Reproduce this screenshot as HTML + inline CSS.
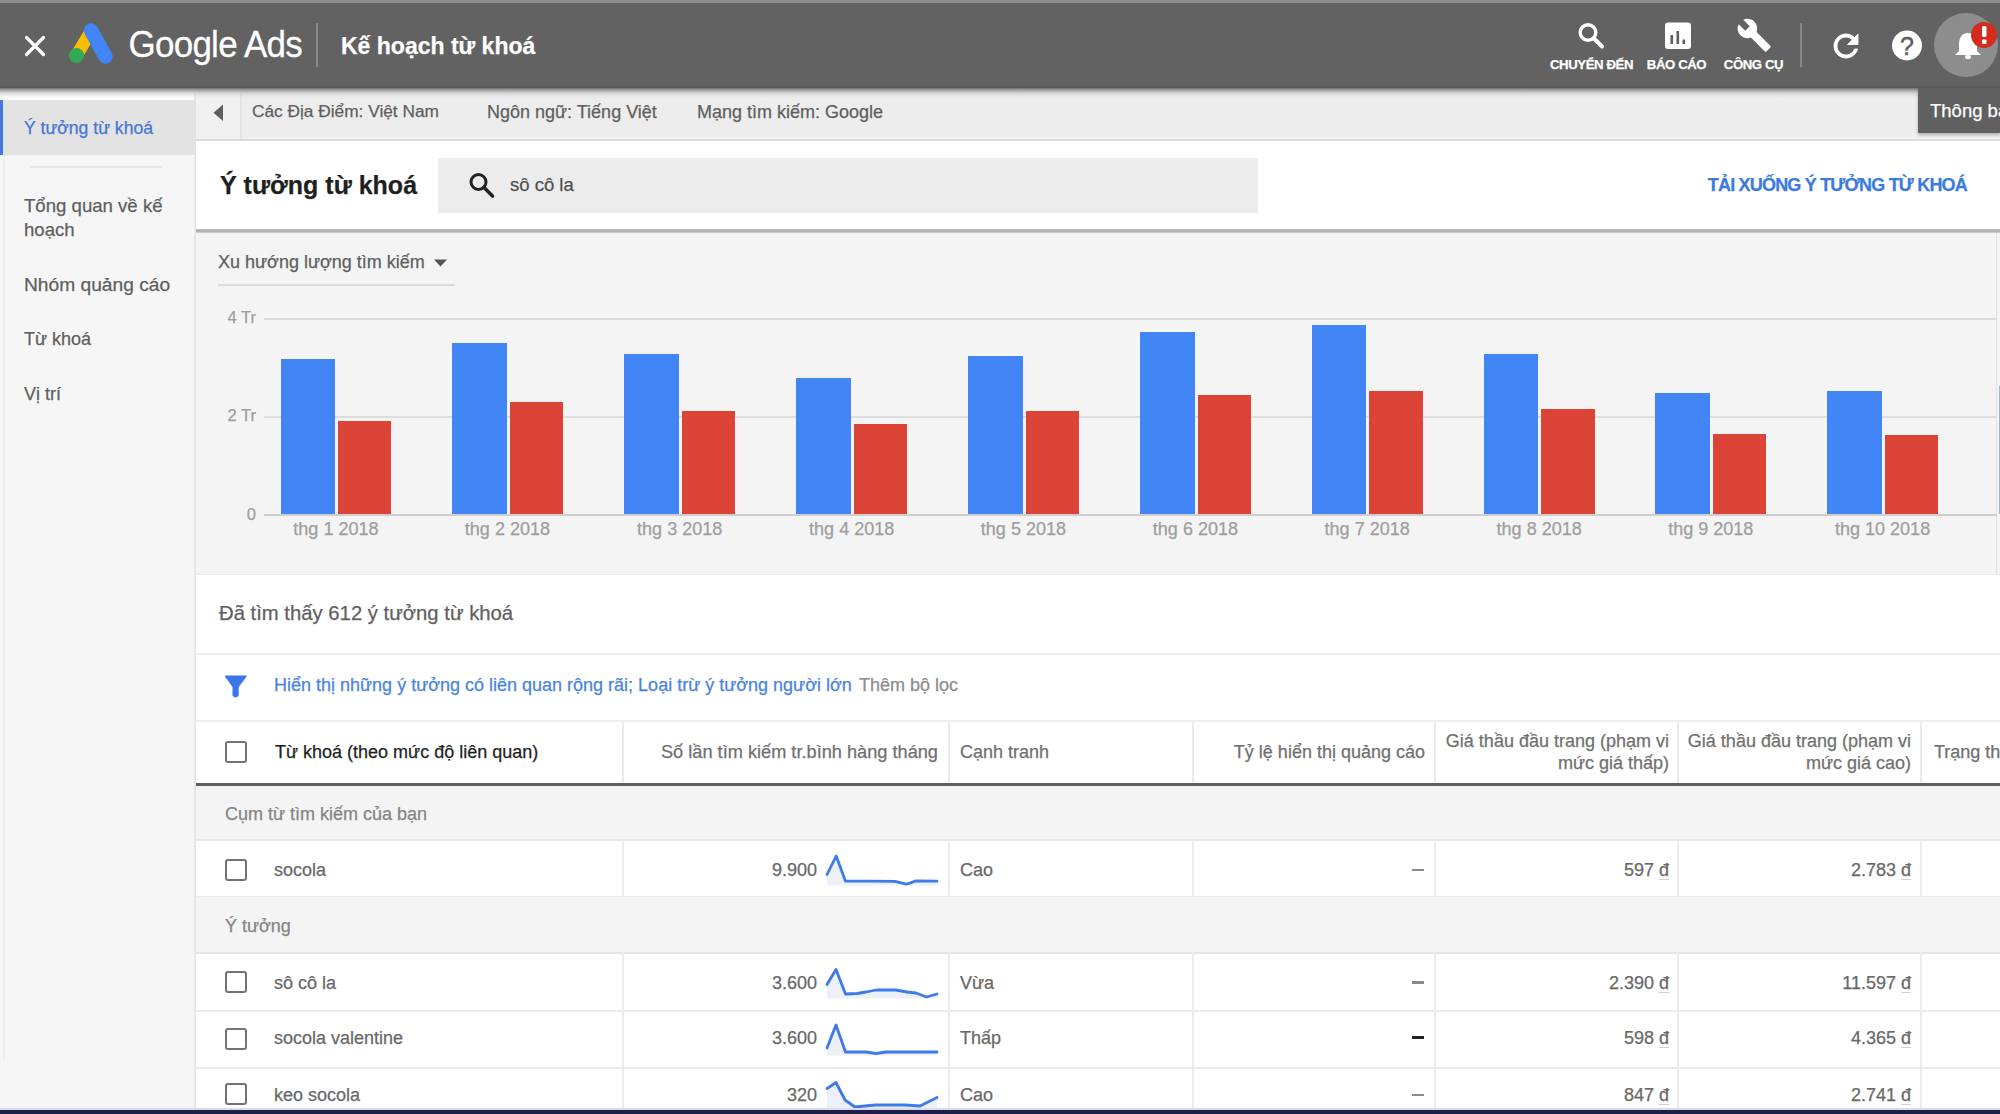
<!DOCTYPE html>
<html lang="vi"><head><meta charset="utf-8"><title>Kế hoạch từ khoá</title>
<style>
html,body{margin:0;padding:0;}
body{width:2000px;height:1114px;overflow:hidden;position:relative;background:#fff;
 font-family:"Liberation Sans",sans-serif;}
.t{position:absolute;white-space:nowrap;-webkit-text-stroke:0.25px currentColor;}
.r{position:absolute;}
svg{position:absolute;overflow:visible;}
.cb{position:absolute;width:18px;height:18px;border:2.5px solid #747474;border-radius:3px;box-sizing:content-box;}
</style></head><body>
<div class="r" style="left:0px;top:0px;width:2000px;height:3px;background:#8d8d8d;"></div>
<div class="r" style="left:0px;top:3px;width:2000px;height:85px;background:#626262;"></div>
<div class="r" style="left:0px;top:86px;width:2000px;height:2px;background:#5a5a5a;"></div>
<svg style="left:0;top:0" width="60" height="90"><path d="M26.5 37.5 L43.5 54.5 M43.5 37.5 L26.5 54.5" stroke="#fff" stroke-width="3.2" stroke-linecap="round"/></svg>
<svg style="left:0;top:0" width="130" height="90">
<path d="M76.5 55.5 L89 34.5" stroke="#fbbc04" stroke-width="12.5" stroke-linecap="round"/>
<path d="M91 30.5 L105.5 56.5" stroke="#4285f4" stroke-width="14.5" stroke-linecap="round"/>
<circle cx="76.5" cy="55.5" r="7.6" fill="#34a853"/>
</svg>
<div class="t" style="left:128.5px;top:27.37px;font-size:35px;line-height:35px;color:#fff;font-weight:400;letter-spacing:-0.75px;transform:scaleY(1.08);transform-origin:0 84.65%;">Google Ads</div>
<div class="r" style="left:316px;top:23px;width:2px;height:44px;background:#8a8a8a;"></div>
<div class="t" style="left:341px;top:35.03px;font-size:23px;line-height:23px;color:#fff;font-weight:700;">Kế hoạch từ khoá</div>
<svg style="left:0;top:0" width="2000" height="90">
<circle cx="1588" cy="32.5" r="7.8" fill="none" stroke="#fff" stroke-width="3.4"/>
<path d="M1594 38.5 L1602 46.5" stroke="#fff" stroke-width="4" stroke-linecap="round"/>
<rect x="1665" y="22.5" width="26" height="26.5" rx="3" fill="#fff"/>
<rect x="1670.5" y="35" width="2.6" height="9" fill="#5f5f5f"/>
<rect x="1676.5" y="31" width="2.6" height="13" fill="#5f5f5f"/>
<rect x="1682.5" y="39.5" width="2.6" height="4.5" fill="#5f5f5f"/>
<path transform="translate(1736.2 17.2) scale(1.5)" d="M22.7 19l-9.1-9.1c.9-2.3.4-5-1.5-6.9-2-2-5-2.4-7.4-1.3L9 6 6 9 1.6 4.7C.4 7.1.9 10.1 2.9 12.1c1.9 1.9 4.6 2.4 6.9 1.5l9.1 9.1c.4.4 1 .4 1.4 0l2.3-2.3c.5-.4.5-1.1.1-1.4z" fill="#fff"/>
<rect x="1800" y="23" width="2" height="44" fill="#878787"/>
<path transform="translate(1828 28) scale(1.5)" d="M17.65 6.35C16.2 4.9 14.21 4 12 4c-4.42 0-7.99 3.58-7.99 8s3.57 8 7.99 8c3.73 0 6.84-2.55 7.73-6h-2.08c-.82 2.33-3.04 4-5.650 4-3.31 0-6-2.69-6-6s2.69-6 6-6c1.66 0 3.14.69 4.22 1.78L13 11h7V4l-2.35 2.35z" fill="#fff" stroke="#fff" stroke-width="0.6"/>
<circle cx="1907" cy="45.5" r="15" fill="#fff"/>
<circle cx="1966" cy="45" r="32" fill="#8d8d8d"/>
<path d="M1968 33 C1961 33 1959 39 1959 45 L1959 51 L1955 55 L1981 55 L1977 51 L1977 45 C1977 39 1975 33 1968 33 Z" fill="#fff"/>
<rect x="1965" y="55" width="6" height="4" rx="2" fill="#fff"/>
<circle cx="1984" cy="35" r="13" fill="#d52b1e"/>
<rect x="1982" y="26" width="4.5" height="11" rx="1.5" fill="#fff"/>
<rect x="1982" y="39.5" width="4.5" height="4.5" rx="1" fill="#fff"/>
</svg>
<div class="t" style="left:1591.5px;top:57.83px;font-size:13.2px;line-height:13.2px;color:#fff;font-weight:700;letter-spacing:-0.4px;transform:translateX(-50%);">CHUYỂN ĐẾN</div>
<div class="t" style="left:1676.5px;top:57.83px;font-size:13.2px;line-height:13.2px;color:#fff;font-weight:700;letter-spacing:-0.4px;transform:translateX(-50%);">BÁO CÁO</div>
<div class="t" style="left:1753.5px;top:57.83px;font-size:13.2px;line-height:13.2px;color:#fff;font-weight:700;letter-spacing:-0.4px;transform:translateX(-50%);">CÔNG CỤ</div>
<div class="r" style="left:0px;top:88px;width:195px;height:1022px;background:#f6f6f6;"></div>
<div class="r" style="left:0px;top:93px;width:194px;height:7px;background:#fcfcfc;"></div>
<div class="r" style="left:194px;top:93px;width:3px;height:1017px;background:linear-gradient(90deg,#ececec,#e3e3e3,#f0f0f0);"></div>
<div class="r" style="left:0px;top:100px;width:195px;height:55px;background:#e3e3e3;"></div>
<div class="r" style="left:0px;top:100px;width:2.5px;height:55px;background:#3f7be0;"></div>
<div class="t" style="left:24px;top:119.60px;font-size:17.6px;line-height:17.6px;color:#4576d8;font-weight:400;">Ý tưởng từ khoá</div>
<div class="r" style="left:30px;top:166px;width:132px;height:2px;background:#e6e6e6;"></div>
<div class="r" style="left:3px;top:155px;width:2px;height:905px;background:#eeeeee;"></div>
<div class="t" style="left:24px;top:197.06px;font-size:18.6px;line-height:18.6px;color:#5f5f5f;font-weight:400;">Tổng quan về kế</div>
<div class="t" style="left:24px;top:221.26px;font-size:18.6px;line-height:18.6px;color:#5f5f5f;font-weight:400;">hoạch</div>
<div class="t" style="left:24px;top:274.75px;font-size:19.2px;line-height:19.2px;color:#5f5f5f;font-weight:400;">Nhóm quảng cáo</div>
<div class="t" style="left:24px;top:329.76px;font-size:18px;line-height:18px;color:#5f5f5f;font-weight:400;">Từ khoá</div>
<div class="t" style="left:24px;top:384.76px;font-size:18px;line-height:18px;color:#5f5f5f;font-weight:400;">Vị trí</div>
<div class="r" style="left:196px;top:88px;width:1804px;height:51px;background:#ededed;"></div>
<div class="r" style="left:196px;top:88px;width:45px;height:51px;background:#f1f1f1;"></div>
<div class="r" style="left:196px;top:137px;width:1804px;height:2px;background:#f1f1f1;"></div>
<div class="r" style="left:196px;top:139px;width:1804px;height:2px;background:#dcdcdc;"></div>
<div class="r" style="left:240px;top:93px;width:2px;height:46px;background:#e4e4e4;"></div>
<svg style="left:0;top:0" width="300" height="140"><path d="M223 104.5 L213.5 112.8 L223 121 Z" fill="#5f5f5f"/></svg>
<div class="t" style="left:252px;top:103.36px;font-size:17.3px;line-height:17.3px;color:#5f5f5f;font-weight:400;">Các Địa Điểm: Việt Nam</div>
<div class="t" style="left:487px;top:102.76px;font-size:18px;line-height:18px;color:#5f5f5f;font-weight:400;">Ngôn ngữ: Tiếng Việt</div>
<div class="t" style="left:697px;top:102.76px;font-size:18px;line-height:18px;color:#5f5f5f;font-weight:400;">Mạng tìm kiếm: Google</div>
<div class="r" style="left:0px;top:88px;width:2000px;height:11px;background:linear-gradient(rgba(80,80,80,.8),rgba(110,110,110,.55) 22%,rgba(160,160,160,.3) 50%,rgba(200,200,200,.12) 78%,rgba(230,230,230,0));"></div>
<div class="r" style="left:196px;top:141px;width:1804px;height:88px;background:#ffffff;"></div>
<div class="r" style="left:196px;top:229px;width:1804px;height:4px;background:linear-gradient(#c4c4c4,#b0b0b0 30%,#b0b0b0 70%,#dadada);"></div>
<div class="t" style="left:220px;top:173.34px;font-size:25px;line-height:25px;color:#1f1f1f;font-weight:700;">Ý tưởng từ khoá</div>
<div class="r" style="left:438px;top:158px;width:820px;height:55px;background:#ececec;"></div>
<svg style="left:0;top:0" width="600" height="220">
<circle cx="478.5" cy="182" r="7.5" fill="none" stroke="#222" stroke-width="3"/>
<path d="M484 187.5 L492.5 196" stroke="#222" stroke-width="3.6" stroke-linecap="round"/>
</svg>
<div class="t" style="left:510px;top:175.64px;font-size:18.5px;line-height:18.5px;color:#505050;font-weight:400;">sô cô la</div>
<div class="t" style="right:33px;text-align:right;top:175.76px;font-size:18px;line-height:18px;color:#3b7be0;font-weight:700;letter-spacing:-0.8px;">TẢI XUỐNG Ý TƯỞNG TỪ KHOÁ</div>
<div class="r" style="left:196px;top:233px;width:1804px;height:341px;background:#f4f4f4;"></div>
<div class="r" style="left:1996px;top:233px;width:1px;height:341px;background:#e4e4e4;"></div>
<div class="t" style="left:218px;top:253.26px;font-size:18px;line-height:18px;color:#5f5f5f;font-weight:400;">Xu hướng lượng tìm kiếm</div>
<svg style="left:0;top:0" width="500" height="300"><path d="M434 259.5 L447 259.5 L440.5 266.5 Z" fill="#555"/></svg>
<div class="r" style="left:218px;top:284px;width:237px;height:2px;background:#dcdcdc;"></div>
<div class="r" style="left:264px;top:318px;width:1733px;height:2px;background:#dcdcdc;"></div>
<div class="r" style="left:264px;top:415.5px;width:1733px;height:2px;background:#dedede;"></div>
<div class="r" style="left:264px;top:513.5px;width:1733px;height:2px;background:#cfcfcf;"></div>
<div class="t" style="right:1744px;text-align:right;top:308.73px;font-size:16.5px;line-height:16.5px;color:#9e9e9e;font-weight:400;">4 Tr</div>
<div class="t" style="right:1744px;text-align:right;top:407.03px;font-size:16.5px;line-height:16.5px;color:#9e9e9e;font-weight:400;">2 Tr</div>
<div class="t" style="right:1744px;text-align:right;top:505.83px;font-size:16.5px;line-height:16.5px;color:#9e9e9e;font-weight:400;">0</div>
<div class="r" style="left:280.5px;top:359.3px;width:54.5px;height:154.9px;background:#4285f4;"></div>
<div class="r" style="left:338.0px;top:421px;width:53.3px;height:93.2px;background:#db4437;"></div>
<div class="t" style="left:335.9px;top:519.76px;font-size:18px;line-height:18px;color:#9e9e9e;font-weight:400;transform:translateX(-50%);">thg 1 2018</div>
<div class="r" style="left:452px;top:342.6px;width:54.5px;height:171.6px;background:#4285f4;"></div>
<div class="r" style="left:509.5px;top:402.2px;width:53.3px;height:112.0px;background:#db4437;"></div>
<div class="t" style="left:507.4px;top:519.76px;font-size:18px;line-height:18px;color:#9e9e9e;font-weight:400;transform:translateX(-50%);">thg 2 2018</div>
<div class="r" style="left:624.25px;top:354.25px;width:54.5px;height:159.95px;background:#4285f4;"></div>
<div class="r" style="left:681.75px;top:411.25px;width:53.3px;height:102.95px;background:#db4437;"></div>
<div class="t" style="left:679.65px;top:519.76px;font-size:18px;line-height:18px;color:#9e9e9e;font-weight:400;transform:translateX(-50%);">thg 3 2018</div>
<div class="r" style="left:796.25px;top:378px;width:54.5px;height:136.2px;background:#4285f4;"></div>
<div class="r" style="left:853.75px;top:423.75px;width:53.3px;height:90.45px;background:#db4437;"></div>
<div class="t" style="left:851.65px;top:519.76px;font-size:18px;line-height:18px;color:#9e9e9e;font-weight:400;transform:translateX(-50%);">thg 4 2018</div>
<div class="r" style="left:968px;top:355.5px;width:54.5px;height:158.7px;background:#4285f4;"></div>
<div class="r" style="left:1025.5px;top:411.25px;width:53.3px;height:102.95px;background:#db4437;"></div>
<div class="t" style="left:1023.4px;top:519.76px;font-size:18px;line-height:18px;color:#9e9e9e;font-weight:400;transform:translateX(-50%);">thg 5 2018</div>
<div class="r" style="left:1140px;top:332px;width:54.5px;height:182.2px;background:#4285f4;"></div>
<div class="r" style="left:1197.5px;top:394.5px;width:53.3px;height:119.7px;background:#db4437;"></div>
<div class="t" style="left:1195.4px;top:519.76px;font-size:18px;line-height:18px;color:#9e9e9e;font-weight:400;transform:translateX(-50%);">thg 6 2018</div>
<div class="r" style="left:1311.75px;top:325px;width:54.5px;height:189.2px;background:#4285f4;"></div>
<div class="r" style="left:1369.25px;top:390.75px;width:53.3px;height:123.45px;background:#db4437;"></div>
<div class="t" style="left:1367.15px;top:519.76px;font-size:18px;line-height:18px;color:#9e9e9e;font-weight:400;transform:translateX(-50%);">thg 7 2018</div>
<div class="r" style="left:1483.75px;top:354.25px;width:54.5px;height:159.95px;background:#4285f4;"></div>
<div class="r" style="left:1541.25px;top:409.25px;width:53.3px;height:104.95px;background:#db4437;"></div>
<div class="t" style="left:1539.15px;top:519.76px;font-size:18px;line-height:18px;color:#9e9e9e;font-weight:400;transform:translateX(-50%);">thg 8 2018</div>
<div class="r" style="left:1655.4px;top:392.5px;width:54.5px;height:121.7px;background:#4285f4;"></div>
<div class="r" style="left:1712.9px;top:433.6px;width:53.3px;height:80.6px;background:#db4437;"></div>
<div class="t" style="left:1710.8px;top:519.76px;font-size:18px;line-height:18px;color:#9e9e9e;font-weight:400;transform:translateX(-50%);">thg 9 2018</div>
<div class="r" style="left:1827.2px;top:390.7px;width:54.5px;height:123.5px;background:#4285f4;"></div>
<div class="r" style="left:1884.7px;top:434.7px;width:53.3px;height:79.5px;background:#db4437;"></div>
<div class="t" style="left:1882.6px;top:519.76px;font-size:18px;line-height:18px;color:#9e9e9e;font-weight:400;transform:translateX(-50%);">thg 10 2018</div>
<div class="r" style="left:1999px;top:386px;width:1px;height:128px;background:#9fb2ea;"></div>
<div class="r" style="left:196px;top:574px;width:1804px;height:536px;background:#ffffff;"></div>
<div class="r" style="left:196px;top:574px;width:1804px;height:1px;background:#ececec;"></div>
<div class="t" style="left:219px;top:602.82px;font-size:20.3px;line-height:20.3px;color:#5f5f5f;font-weight:400;">Đã tìm thấy 612 ý tưởng từ khoá</div>
<div class="r" style="left:196px;top:653px;width:1804px;height:2px;background:#eeeeee;"></div>
<svg style="left:0;top:0" width="300" height="720"><path d="M225.8 676.2 L245.8 676.2 L237.9 686.8 L237.9 695.2 Q235.6 698.2 233.3 695.2 L233.3 686.8 Z" fill="#3a76ea" stroke="#3a76ea" stroke-width="1.6" stroke-linejoin="round"/></svg>
<div class="t" style="left:274px;top:675.76px;font-size:18px;line-height:18px;color:#4a84e0;font-weight:400;">Hiển thị những ý tưởng có liên quan rộng rãi; Loại trừ ý tưởng người lớn</div>
<div class="t" style="left:859px;top:675.76px;font-size:18px;line-height:18px;color:#8c8c8c;font-weight:400;">Thêm bộ lọc</div>
<div class="r" style="left:196px;top:720px;width:1804px;height:2px;background:#eeeeee;"></div>
<div class="r" style="left:622.4px;top:722px;width:2px;height:61px;background:#ebebeb;"></div>
<div class="r" style="left:948px;top:722px;width:2px;height:61px;background:#ebebeb;"></div>
<div class="r" style="left:1191.5px;top:722px;width:2px;height:61px;background:#ebebeb;"></div>
<div class="r" style="left:1434px;top:722px;width:2px;height:61px;background:#ebebeb;"></div>
<div class="r" style="left:1677px;top:722px;width:2px;height:61px;background:#ebebeb;"></div>
<div class="r" style="left:1920.3px;top:722px;width:2px;height:61px;background:#ebebeb;"></div>
<div class="cb" style="left:224.5px;top:741px;"></div>
<div class="t" style="left:275px;top:742.76px;font-size:18px;line-height:18px;color:#1f1f1f;font-weight:400;">Từ khoá (theo mức độ liên quan)</div>
<div class="t" style="right:1062px;text-align:right;top:742.59px;font-size:18.2px;line-height:18.2px;color:#707070;font-weight:400;">Số lần tìm kiếm tr.bình hàng tháng</div>
<div class="t" style="left:960px;top:742.76px;font-size:18px;line-height:18px;color:#707070;font-weight:400;">Cạnh tranh</div>
<div class="t" style="right:575px;text-align:right;top:742.76px;font-size:18px;line-height:18px;color:#707070;font-weight:400;">Tỷ lệ hiển thị quảng cáo</div>
<div class="t" style="right:331px;text-align:right;top:731.76px;font-size:18px;line-height:18px;color:#707070;font-weight:400;">Giá thầu đầu trang (phạm vi</div>
<div class="t" style="right:331px;text-align:right;top:754.26px;font-size:18px;line-height:18px;color:#707070;font-weight:400;">mức giá thấp)</div>
<div class="t" style="right:89px;text-align:right;top:731.76px;font-size:18px;line-height:18px;color:#707070;font-weight:400;">Giá thầu đầu trang (phạm vi</div>
<div class="t" style="right:89px;text-align:right;top:754.26px;font-size:18px;line-height:18px;color:#707070;font-weight:400;">mức giá cao)</div>
<div class="t" style="left:1934px;top:742.76px;font-size:18px;line-height:18px;color:#707070;font-weight:400;">Trạng thái</div>
<div class="r" style="left:196px;top:783px;width:1804px;height:3px;background:#5f5f5f;"></div>
<div class="r" style="left:196px;top:786px;width:1804px;height:54px;background:#f4f4f4;"></div>
<div class="r" style="left:196px;top:839px;width:1804px;height:2px;background:#e6e6e6;"></div>
<div class="t" style="left:225px;top:804.76px;font-size:18px;line-height:18px;color:#858585;font-weight:400;">Cụm từ tìm kiếm của bạn</div>
<div class="r" style="left:622.4px;top:840px;width:2px;height:57px;background:#ececec;"></div>
<div class="r" style="left:948px;top:840px;width:2px;height:57px;background:#ececec;"></div>
<div class="r" style="left:1191.5px;top:840px;width:2px;height:57px;background:#ececec;"></div>
<div class="r" style="left:1434px;top:840px;width:2px;height:57px;background:#ececec;"></div>
<div class="r" style="left:1677px;top:840px;width:2px;height:57px;background:#ececec;"></div>
<div class="r" style="left:1920.3px;top:840px;width:2px;height:57px;background:#ececec;"></div>
<div class="r" style="left:196px;top:896px;width:1804px;height:2px;background:#ebebeb;"></div>
<div class="cb" style="left:224.5px;top:858.8px;"></div>
<div class="t" style="left:274px;top:861.26px;font-size:18px;line-height:18px;color:#686868;font-weight:400;">socola</div>
<div class="t" style="right:1183px;text-align:right;top:861.26px;font-size:18px;line-height:18px;color:#686868;font-weight:400;">9.900</div>
<svg style="left:0;top:0" width="1000" height="1114"><polygon points="827,874.5 836.2,856 845.5,881.2 870,881.2 895,881.4 906.5,884.2 916,880.9 937,881.2 937,885.5 827,885.5" fill="#edeff9"/><polyline points="827,874.5 836.2,856 845.5,881.2 870,881.2 895,881.4 906.5,884.2 916,880.9 937,881.2" fill="none" stroke="#3d7be8" stroke-width="2.8" stroke-linejoin="round" stroke-linecap="round"/></svg>
<div class="t" style="left:960px;top:861.26px;font-size:18px;line-height:18px;color:#686868;font-weight:400;">Cao</div>
<div class="r" style="left:1412px;top:868.5px;width:12px;height:2.5px;background:#8a8a8a;"></div>
<div class="t" style="right:331px;text-align:right;top:861.26px;font-size:18px;line-height:18px;color:#686868;font-weight:400;">597 <span style="text-decoration:underline;text-decoration-color:#d2d2d2;text-underline-offset:3px">đ</span></div>
<div class="t" style="right:89px;text-align:right;top:861.26px;font-size:18px;line-height:18px;color:#686868;font-weight:400;">2.783 <span style="text-decoration:underline;text-decoration-color:#d2d2d2;text-underline-offset:3px">đ</span></div>
<div class="r" style="left:196px;top:897px;width:1804px;height:56px;background:#f4f4f4;"></div>
<div class="r" style="left:196px;top:952px;width:1804px;height:2px;background:#e6e6e6;"></div>
<div class="t" style="left:225px;top:916.76px;font-size:18px;line-height:18px;color:#858585;font-weight:400;">Ý tưởng</div>
<div class="r" style="left:622.4px;top:953px;width:2px;height:58px;background:#ececec;"></div>
<div class="r" style="left:948px;top:953px;width:2px;height:58px;background:#ececec;"></div>
<div class="r" style="left:1191.5px;top:953px;width:2px;height:58px;background:#ececec;"></div>
<div class="r" style="left:1434px;top:953px;width:2px;height:58px;background:#ececec;"></div>
<div class="r" style="left:1677px;top:953px;width:2px;height:58px;background:#ececec;"></div>
<div class="r" style="left:1920.3px;top:953px;width:2px;height:58px;background:#ececec;"></div>
<div class="r" style="left:196px;top:1010px;width:1804px;height:2px;background:#ebebeb;"></div>
<div class="cb" style="left:224.5px;top:970.5px;"></div>
<div class="t" style="left:274px;top:973.76px;font-size:18px;line-height:18px;color:#686868;font-weight:400;">sô cô la</div>
<div class="t" style="right:1183px;text-align:right;top:973.76px;font-size:18px;line-height:18px;color:#686868;font-weight:400;">3.600</div>
<svg style="left:0;top:0" width="1000" height="1114"><polygon points="827,984.5 836,969.5 845.5,994 857,993.5 866,992 876,990 896,990 907,992 916,993 926.5,997 937,994 937,998.5 827,998.5" fill="#edeff9"/><polyline points="827,984.5 836,969.5 845.5,994 857,993.5 866,992 876,990 896,990 907,992 916,993 926.5,997 937,994" fill="none" stroke="#3d7be8" stroke-width="2.8" stroke-linejoin="round" stroke-linecap="round"/></svg>
<div class="t" style="left:960px;top:973.76px;font-size:18px;line-height:18px;color:#686868;font-weight:400;">Vừa</div>
<div class="r" style="left:1412px;top:981px;width:12px;height:2.5px;background:#8a8a8a;"></div>
<div class="t" style="right:331px;text-align:right;top:973.76px;font-size:18px;line-height:18px;color:#686868;font-weight:400;">2.390 <span style="text-decoration:underline;text-decoration-color:#d2d2d2;text-underline-offset:3px">đ</span></div>
<div class="t" style="right:89px;text-align:right;top:973.76px;font-size:18px;line-height:18px;color:#686868;font-weight:400;">11.597 <span style="text-decoration:underline;text-decoration-color:#d2d2d2;text-underline-offset:3px">đ</span></div>
<div class="r" style="left:622.4px;top:1011px;width:2px;height:57px;background:#ececec;"></div>
<div class="r" style="left:948px;top:1011px;width:2px;height:57px;background:#ececec;"></div>
<div class="r" style="left:1191.5px;top:1011px;width:2px;height:57px;background:#ececec;"></div>
<div class="r" style="left:1434px;top:1011px;width:2px;height:57px;background:#ececec;"></div>
<div class="r" style="left:1677px;top:1011px;width:2px;height:57px;background:#ececec;"></div>
<div class="r" style="left:1920.3px;top:1011px;width:2px;height:57px;background:#ececec;"></div>
<div class="r" style="left:196px;top:1067px;width:1804px;height:2px;background:#ebebeb;"></div>
<div class="cb" style="left:224.5px;top:1028.0px;"></div>
<div class="t" style="left:274px;top:1028.76px;font-size:18px;line-height:18px;color:#686868;font-weight:400;">socola valentine</div>
<div class="t" style="right:1183px;text-align:right;top:1028.76px;font-size:18px;line-height:18px;color:#686868;font-weight:400;">3.600</div>
<svg style="left:0;top:0" width="1000" height="1114"><polygon points="827,1048 836,1025 845.5,1052 866,1052 876,1053.5 886,1052 937,1052 937,1055.5 827,1055.5" fill="#edeff9"/><polyline points="827,1048 836,1025 845.5,1052 866,1052 876,1053.5 886,1052 937,1052" fill="none" stroke="#3d7be8" stroke-width="2.8" stroke-linejoin="round" stroke-linecap="round"/></svg>
<div class="t" style="left:960px;top:1028.76px;font-size:18px;line-height:18px;color:#686868;font-weight:400;">Thấp</div>
<div class="r" style="left:1412px;top:1036px;width:12px;height:3px;background:#222;"></div>
<div class="t" style="right:331px;text-align:right;top:1028.76px;font-size:18px;line-height:18px;color:#686868;font-weight:400;">598 <span style="text-decoration:underline;text-decoration-color:#d2d2d2;text-underline-offset:3px">đ</span></div>
<div class="t" style="right:89px;text-align:right;top:1028.76px;font-size:18px;line-height:18px;color:#686868;font-weight:400;">4.365 <span style="text-decoration:underline;text-decoration-color:#d2d2d2;text-underline-offset:3px">đ</span></div>
<div class="r" style="left:622.4px;top:1068px;width:2px;height:57px;background:#ececec;"></div>
<div class="r" style="left:948px;top:1068px;width:2px;height:57px;background:#ececec;"></div>
<div class="r" style="left:1191.5px;top:1068px;width:2px;height:57px;background:#ececec;"></div>
<div class="r" style="left:1434px;top:1068px;width:2px;height:57px;background:#ececec;"></div>
<div class="r" style="left:1677px;top:1068px;width:2px;height:57px;background:#ececec;"></div>
<div class="r" style="left:1920.3px;top:1068px;width:2px;height:57px;background:#ececec;"></div>
<div class="r" style="left:196px;top:1124px;width:1804px;height:2px;background:#ebebeb;"></div>
<div class="cb" style="left:224.5px;top:1083.4px;"></div>
<div class="t" style="left:274px;top:1086.26px;font-size:18px;line-height:18px;color:#686868;font-weight:400;">keo socola</div>
<div class="t" style="right:1183px;text-align:right;top:1086.26px;font-size:18px;line-height:18px;color:#686868;font-weight:400;">320</div>
<svg style="left:0;top:0" width="1000" height="1114"><polygon points="827,1088.5 836,1082.5 845,1100 855,1107 875,1105 905,1105 920,1106 937,1097.5 937,1108 827,1108" fill="#edeff9"/><polyline points="827,1088.5 836,1082.5 845,1100 855,1107 875,1105 905,1105 920,1106 937,1097.5" fill="none" stroke="#3d7be8" stroke-width="2.8" stroke-linejoin="round" stroke-linecap="round"/></svg>
<div class="t" style="left:960px;top:1086.26px;font-size:18px;line-height:18px;color:#686868;font-weight:400;">Cao</div>
<div class="r" style="left:1412px;top:1093.5px;width:12px;height:2.5px;background:#8a8a8a;"></div>
<div class="t" style="right:331px;text-align:right;top:1086.26px;font-size:18px;line-height:18px;color:#686868;font-weight:400;">847 <span style="text-decoration:underline;text-decoration-color:#d2d2d2;text-underline-offset:3px">đ</span></div>
<div class="t" style="right:89px;text-align:right;top:1086.26px;font-size:18px;line-height:18px;color:#686868;font-weight:400;">2.741 <span style="text-decoration:underline;text-decoration-color:#d2d2d2;text-underline-offset:3px">đ</span></div>
<div class="t" style="left:1907px;top:34.34px;font-size:25px;line-height:25px;color:#5f5f5f;font-weight:400;transform:translateX(-50%);-webkit-text-stroke:0.5px #5f5f5f;">?</div>
<div class="r" style="left:1918px;top:88px;width:82px;height:45px;background:#606060;box-shadow:0 2px 3px rgba(0,0,0,.25);"></div>
<div class="t" style="left:1930px;top:102.34px;font-size:18.5px;line-height:18.5px;color:#fff;font-weight:400;">Thông báo</div>
<div class="r" style="left:0px;top:1108px;width:2000px;height:2px;background:#d9dbe6;"></div>
<div class="r" style="left:0px;top:1110px;width:2000px;height:4px;background:#1c1f4c;"></div>
</body></html>
